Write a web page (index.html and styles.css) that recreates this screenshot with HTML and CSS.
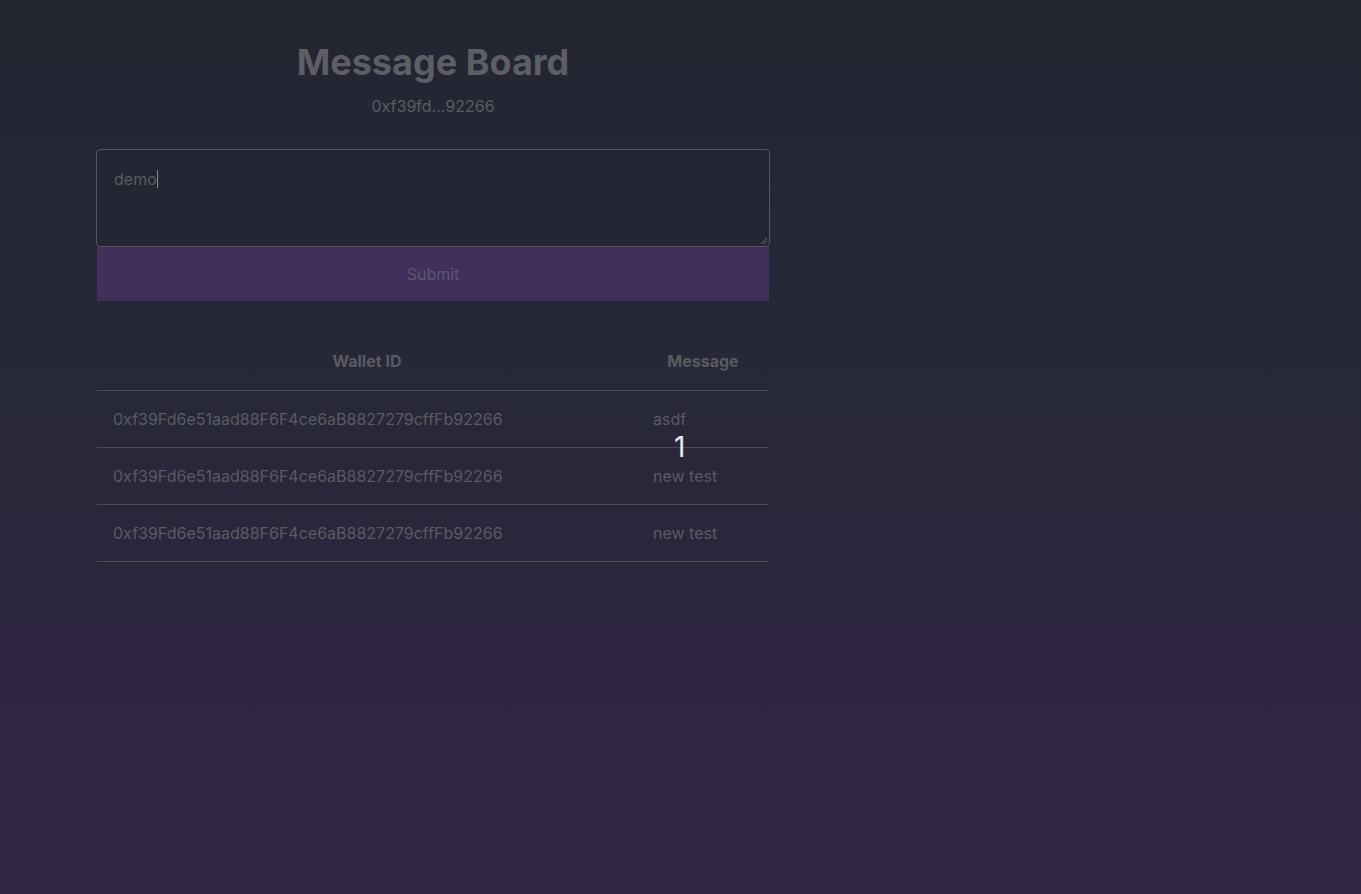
FILE: index.html
```html
<!DOCTYPE html>
<html>
<head>
<meta charset="utf-8">
<link rel="stylesheet" href="styles.css">
</head>
<body>
<div class="page">
  <main class="board">
    <h1 class="title">Message Board</h1>
    <p class="address">0xf39fd...92266</p>
    <form class="compose">
      <div class="input">demo<span class="caret"></span>
        <svg class="grip" width="8" height="8" viewBox="0 0 8 8"><path d="M7 1 L1 7 M7 4 L4 7" stroke="#6a6a72" stroke-width="1" fill="none"/></svg>
      </div>
      <button type="button" class="submit">Submit</button>
    </form>
    <table class="messages">
      <thead>
        <tr><th class="c-wallet">Wallet ID</th><th class="c-msg">Message</th></tr>
      </thead>
      <tbody>
        <tr><td>0xf39Fd6e51aad88F6F4ce6aB8827279cffFb92266</td><td>asdf</td></tr>
        <tr><td>0xf39Fd6e51aad88F6F4ce6aB8827279cffFb92266</td><td>new test</td></tr>
        <tr><td>0xf39Fd6e51aad88F6F4ce6aB8827279cffFb92266</td><td>new test</td></tr>
      </tbody>
    </table>
    <span class="step">1</span>
  </main>
</div>
</body>
</html>
```

FILE: styles.css
```css
html, body {
  margin: 0;
  padding: 0;
  height: 100%;
}
body {
  font-family: Inter, "Liberation Sans", sans-serif;
  background: linear-gradient(180deg, #232631 0%, #28283a 55%, #2e2540 72%, #312742 100%);
  color: #5d5d66;
}
.page {
  min-height: 894px;
  padding-top: 40px;
  box-sizing: border-box;
}
.board {
  position: relative;
  width: 674px;
  margin-left: 96px;
  display: flex;
  flex-direction: column;
}
.title {
  margin: 0;
  text-align: center;
  font-size: 36px;
  line-height: 44px;
  font-weight: 700;
  color: #5e5e67;
}
.address {
  margin: 10px 0 0;
  text-align: center;
  font-size: 16px;
  line-height: 24px;
  color: #5a5b63;
}
.compose {
  margin-top: 31px;
  display: flex;
  flex-direction: column;
}
.input {
  position: relative;
  border: 1px solid #55565e;
  border-radius: 4px;
  background: #252633;
  padding: 19px 17px 0;
  box-sizing: border-box;
  height: 98px;
  font-size: 16px;
  line-height: 20px;
  color: #5a5b63;
}
.caret {
  display: inline-block;
  width: 1px;
  height: 18px;
  background: #8a8a94;
  vertical-align: -3px;
}
.grip {
  position: absolute;
  right: 1px;
  bottom: 1px;
}
.submit {
  margin: 0 1px;
  height: 54px;
  border: none;
  background: #41305c;
  font-family: inherit;
  font-size: 16px;
  color: #5c5870;
  padding: 0;
}
.messages {
  margin: 32px 1px 0;
  border-collapse: collapse;
  width: 672px;
  font-size: 16px;
}
.messages th {
  font-weight: 700;
  height: 57px;
  padding: 0 16px;
  box-sizing: border-box;
  vertical-align: middle;
  border-bottom: 1px solid #4c4c55;
  color: #5a5b63;
  text-align: center;
}
.messages th.c-wallet { width: 540px; }
.messages td {
  height: 57px;
  padding: 0 16px;
  box-sizing: border-box;
  border-bottom: 1px solid #4c4c55;
  color: #5a5b63;
  text-align: left;
}
.step {
  position: absolute;
  left: 578px;
  top: 390px;
  font-size: 28px;
  line-height: 34px;
  color: #e8eaf2;
}
```
